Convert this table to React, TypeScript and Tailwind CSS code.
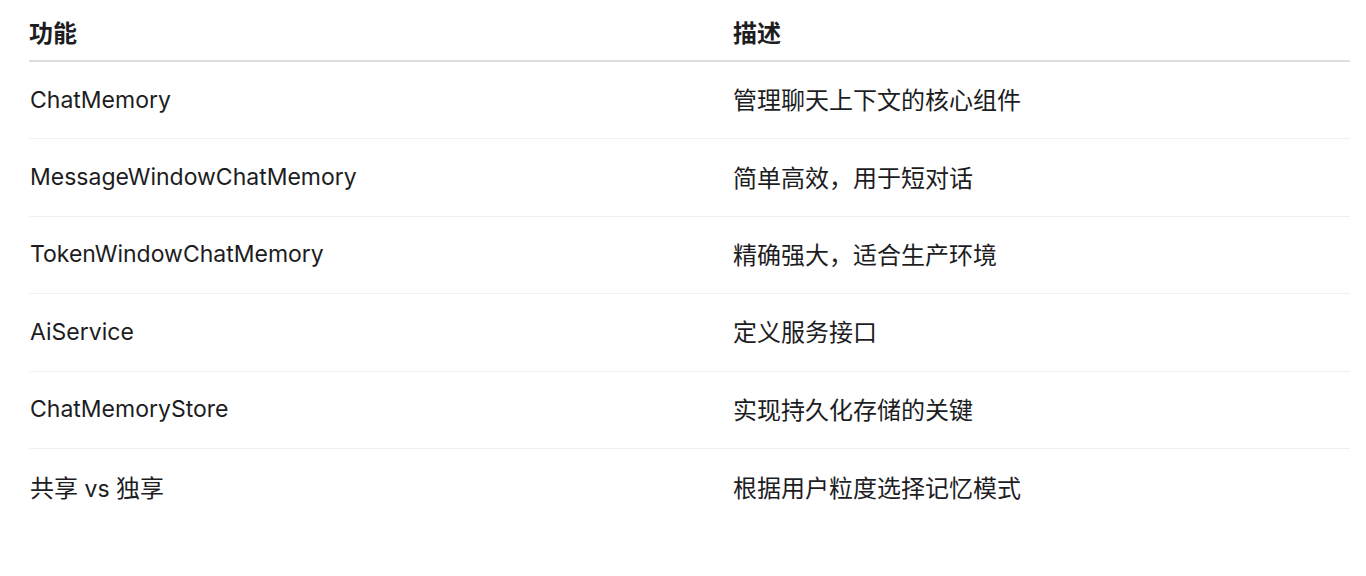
import React from 'react';

const latin = "font-['Inter','Noto_Sans_CJK_SC',sans-serif] text-[23px]";
const cjk = "font-['Noto_Sans_CJK_SC',sans-serif] text-[24px]";

type Row = { name: React.ReactNode; desc: string };

const rows: Row[] = [
  { name: <span className={latin}>ChatMemory</span>, desc: '管理聊天上下文的核心组件' },
  { name: <span className={latin}>MessageWindowChatMemory</span>, desc: '简单高效，用于短对话' },
  { name: <span className={latin}>TokenWindowChatMemory</span>, desc: '精确强大，适合生产环境' },
  { name: <span className={latin}>AiService</span>, desc: '定义服务接口' },
  { name: <span className={latin}>ChatMemoryStore</span>, desc: '实现持久化存储的关键' },
  {
    name: (
      <span>
        <span className={cjk}>共享</span>
        <span className={latin}> vs </span>
        <span className={cjk}>独享</span>
      </span>
    ),
    desc: '根据用户粒度选择记忆模式',
  },
];

const App: React.FC = () => {
  return (
    <div className="min-h-screen bg-white text-[#1d1d1f]">
      <div className="ml-[29px] w-[1321px]">
        {/* Header */}
        <div className="grid grid-cols-[704px_1fr] h-[62px] pt-[4px] items-center border-b-2 border-[#dedede]">
          <div className={`${cjk} font-bold leading-none`}>功能</div>
          <div className={`${cjk} font-bold leading-none`}>描述</div>
        </div>

        {/* Rows */}
        {rows.map((r, i) => (
          <div
            key={i}
            className={`grid grid-cols-[704px_1fr] h-[77.4px] items-center ${
              i < rows.length - 1 ? 'border-b border-[#f0f0f0]' : ''
            }`}
          >
            <div className="pl-px leading-none">{r.name}</div>
            <div className={`${cjk} leading-none pb-[2px]`}>{r.desc}</div>
          </div>
        ))}
      </div>
    </div>
  );
};

export default App;
